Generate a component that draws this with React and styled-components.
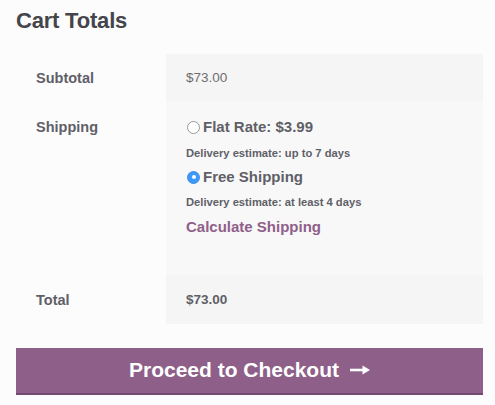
import React from "react";
import styled, { createGlobalStyle } from "styled-components";

const GlobalStyle = createGlobalStyle`
  html, body {
    margin: 0;
    padding: 0;
    background: #fcfcfc;
  }
  body {
    font-family: "Liberation Sans", Arial, sans-serif;
    color: #6d6d6d;
  }
`;

const Page = styled.div`
  padding: 8px 12px 0 16px;
`;

const Title = styled.h2`
  margin: 0 0 20px;
  font-size: 22px;
  line-height: 26px;
  font-weight: 700;
  color: #43454b;
  letter-spacing: -0.2px;
`;

const Table = styled.div`
  display: grid;
  grid-template-columns: 150px 1fr;
`;

const Label = styled.div`
  padding: ${(p) => p.$pad || "13px 20px"};
  font-size: 14.5px;
  line-height: 22px;
  font-weight: 700;
  color: #5f6067;
`;

const Value = styled.div`
  padding: ${(p) => p.$pad || "13px 20px"};
  background: ${(p) => p.$bg || "#f5f5f5"};
  font-size: 13.5px;
  line-height: 22px;
  font-weight: ${(p) => (p.$bold ? 700 : 400)};
  color: ${(p) => (p.$bold ? "#5f6067" : "#6d6d6d")};
`;

const Option = styled.label`
  display: flex;
  align-items: center;
  gap: 3px;
  margin-top: ${(p) => p.$mt || 0}px;
  font-size: 15px;
  line-height: 22px;
  font-weight: 700;
  color: #5f6067;
`;

const Radio = styled.span`
  box-sizing: border-box;
  width: 13px;
  height: 13px;
  margin-left: 1px;
  border-radius: 50%;
  display: flex;
  align-items: center;
  justify-content: center;
  background: ${(p) => (p.$checked ? "#3b99fc" : "#fff")};
  border: 1px solid ${(p) => (p.$checked ? "#3b8fe8" : "#9a9a9a")};

  &::after {
    content: "";
    display: ${(p) => (p.$checked ? "block" : "none")};
    width: 4px;
    height: 4px;
    border-radius: 50%;
    background: #fff;
  }
`;

const Estimate = styled.p`
  margin: ${(p) => p.$mt || 7}px 0 0;
  font-size: 11.2px;
  line-height: 16px;
  font-weight: 700;
  color: #5f6067;
`;

const CalcLink = styled.a`
  display: block;
  margin-top: 6px;
  font-size: 15px;
  line-height: 22px;
  font-weight: 700;
  color: #8f5f8a;
  text-decoration: none;
`;

const CheckoutButton = styled.button`
  box-sizing: border-box;
  width: 100%;
  height: 47px;
  margin-top: 24px;
  display: flex;
  align-items: center;
  justify-content: center;
  gap: 11px;
  border: none;
  border-bottom: 2px solid #744870;
  background: #8e5f89;
  color: #fff;
  font-family: "Liberation Sans", Arial, sans-serif;
  font-size: 21px;
  font-weight: 700;
  padding: 0 0 1px;
  cursor: pointer;
`;

const Arrow = () => (
  <svg width="20" height="12" viewBox="0 0 20 12">
    <path d="M0 6h14" stroke="#fff" strokeWidth="2.6" />
    <path d="M12.5 1.5L20 6l-7.5 4.5z" fill="#fff" />
  </svg>
);

export default function App() {
  return (
    <Page>
      <GlobalStyle />
      <Title>Cart Totals</Title>
      <Table>
        <Label>Subtotal</Label>
        <Value>$73.00</Value>

        <Label $pad="14px 20px">Shipping</Label>
        <Value $bg="#f8f8f8" $pad="14px 20px 37px">
          <Option>
            <Radio />
            Flat Rate: $3.99
          </Option>
          <Estimate>Delivery estimate: up to 7 days</Estimate>
          <Option $mt={5}>
            <Radio $checked />
            Free Shipping
          </Option>
          <Estimate $mt={6}>Delivery estimate: at least 4 days</Estimate>
          <CalcLink href="#">Calculate Shipping</CalcLink>
        </Value>

        <Label $pad="14px 20px 13px">Total</Label>
        <Value $pad="14px 20px 13px" $bold>
          $73.00
        </Value>
      </Table>
      <CheckoutButton>
        Proceed to Checkout
        <Arrow />
      </CheckoutButton>
    </Page>
  );
}
